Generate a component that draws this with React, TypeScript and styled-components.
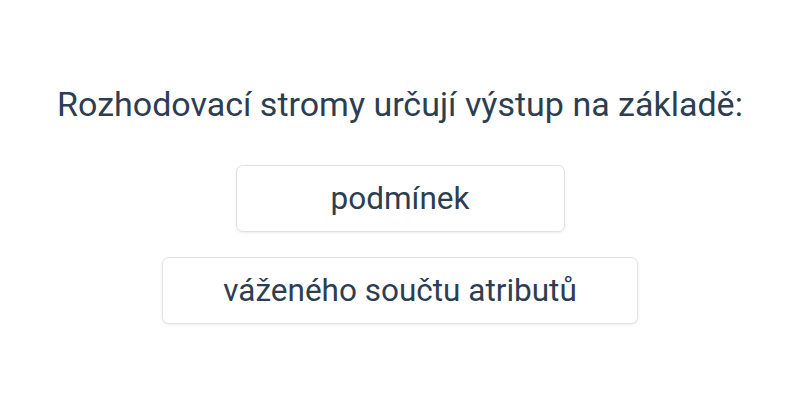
import React from "react";
import styled, { createGlobalStyle } from "styled-components";

const GlobalStyle = createGlobalStyle`
  html, body {
    margin: 0;
    padding: 0;
    background: #ffffff;
  }
  body {
    font-family: Roboto, "Liberation Sans", sans-serif;
    color: #2c3e50;
  }
`;

const PageSC = styled.div`
  width: 800px;
  height: 400px;
  display: flex;
  flex-direction: column;
  align-items: center;
  padding-top: 84px;
  box-sizing: border-box;
`;

const QuestionSC = styled.h1`
  margin: 0 0 41px;
  font-size: 34px;
  font-weight: 400;
  line-height: 40px;
  color: #2c3e50;
  white-space: nowrap;
`;

const AnswersSC = styled.div`
  display: flex;
  flex-direction: column;
  align-items: center;
  gap: 25px;
`;

const AnswerButton = styled.button<{ $width: number }>`
  width: ${(p) => p.$width}px;
  height: 67px;
  padding: 0;
  background: #ffffff;
  border: 1px solid #e2e2e2;
  border-radius: 7px;
  box-shadow: 0 1px 3px rgba(0, 0, 0, 0.08);
  font-family: Roboto, "Liberation Sans", sans-serif;
  font-size: 31.5px;
  color: #2c3e50;
  cursor: pointer;
`;

const answers = [
  { text: "podmínek", width: 329 },
  { text: "váženého součtu atributů", width: 476 },
];

export default function App() {
  return (
    <>
      <GlobalStyle />
      <PageSC>
        <QuestionSC>Rozhodovací stromy určují výstup na základě:</QuestionSC>
        <AnswersSC>
          {answers.map((a) => (
            <AnswerButton key={a.text} $width={a.width}>
              {a.text}
            </AnswerButton>
          ))}
        </AnswersSC>
      </PageSC>
    </>
  );
}
